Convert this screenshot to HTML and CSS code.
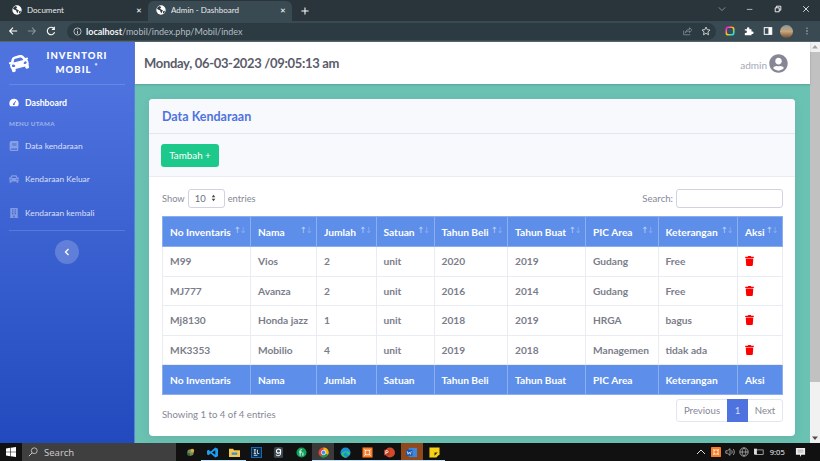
FILE: index.html
```html
<!DOCTYPE html>
<html lang="id">
<head>
<meta charset="utf-8">
<title>Admin - Dashboard</title>
<link rel="stylesheet" href="styles.css">
</head>
<body>
<svg class="defs" aria-hidden="true">
  <symbol id="globe" viewBox="0 0 16 16"><circle cx="8" cy="8" r="7.5" fill="#fff"/><path d="M6 1.5 3 3 1.5 6l3 2 2 .5.5 2 1.5 3 1.500-3 1-2L8 7 6.500 5 8.500 3.500zM14 9l-2 .5-1 2 .5 2.500L14 11.500z" fill="#303c43"/></symbol>
  <symbol id="car" viewBox="0 0 512 512"><path d="M499.990 176h-59.870l-16.640-41.600C406.380 91.630 365.570 64 319.500 64h-127c-46.060 0-86.880 27.630-103.990 70.400L71.870 176H12.010C4.200 176-1.530 183.340.370 190.910l6 24C7.700 220.250 12.500 224 18.010 224h20.070C24.650 235.730 16 252.780 16 272v48c0 16.120 6.160 30.670 16 41.930V416c0 17.670 14.330 32 32 32h32c17.670 0 32-14.330 32-32v-32h256v32c0 17.670 14.330 32 32 32h32c17.670 0 32-14.330 32-32v-54.070c9.840-11.250 16-25.800 16-41.930v-48c0-19.220-8.650-36.270-22.070-48H494c5.510 0 10.310-3.750 11.640-9.090l6-24c1.890-7.570-3.840-14.910-11.650-14.910zm-352.060-17.830c7.290-18.220 24.940-30.170 44.570-30.170h127c19.630 0 37.280 11.950 44.570 30.170L384 208H128l19.930-49.830zM96 319.800c-19.200 0-32-12.760-32-31.900S76.800 256 96 256s48 28.710 48 47.850-28.800 15.950-48 15.950zm320 0c-19.200 0-48 3.190-48-15.950S396.800 256 416 256s32 12.760 32 31.900-12.800 31.900-32 31.900z"/></symbol>
  <symbol id="trash" viewBox="0 0 448 512"><path d="M432 32H312l-9.400-18.700A24 24 0 0 0 281.100 0H166.800a23.720 23.720 0 0 0-21.400 13.300L136 32H16A16 16 0 0 0 0 48v32a16 16 0 0 0 16 16h416a16 16 0 0 0 16-16V48a16 16 0 0 0-16-16zM53.200 467a48 48 0 0 0 47.900 45h245.800a48 48 0 0 0 47.900-45L416 128H32z"/></symbol>
  <symbol id="book" viewBox="0 0 448 512"><path d="M448 360V24c0-13.300-10.700-24-24-24H96C43 0 0 43 0 96v320c0 53 43 96 96 96h328c13.300 0 24-10.700 24-24v-16c0-7.500-3.500-14.300-8.900-18.700-4.200-15.400-4.200-59.300 0-74.700 5.400-4.300 8.900-11.100 8.900-18.600zM128 134c0-3.300 2.700-6 6-6h212c3.300 0 6 2.700 6 6v20c0 3.300-2.700 6-6 6H134c-3.300 0-6-2.700-6-6v-20zm0 64c0-3.300 2.700-6 6-6h212c3.300 0 6 2.700 6 6v20c0 3.300-2.700 6-6 6H134c-3.300 0-6-2.700-6-6v-20zm253.400 250H96c-17.700 0-32-14.300-32-32 0-17.600 14.400-32 32-32h285.400c-1.900 17.100-1.900 46.900 0 64z"/></symbol>
  <symbol id="building" viewBox="0 0 448 512"><path d="M436 480h-20V24c0-13.300-10.700-24-24-24H56C42.700 0 32 10.700 32 24v456H12c-6.600 0-12 5.400-12 12v20h448v-20c0-6.600-5.400-12-12-12zM128 76c0-6.600 5.400-12 12-12h40c6.600 0 12 5.400 12 12v40c0 6.600-5.400 12-12 12h-40c-6.600 0-12-5.400-12-12V76zm0 96c0-6.600 5.400-12 12-12h40c6.600 0 12 5.400 12 12v40c0 6.600-5.400 12-12 12h-40c-6.600 0-12-5.400-12-12v-40zm52 148h-40c-6.600 0-12-5.400-12-12v-40c0-6.600 5.400-12 12-12h40c6.600 0 12 5.400 12 12v40c0 6.600-5.400 12-12 12zm76 160h-64v-84c0-6.600 5.400-12 12-12h40c6.600 0 12 5.400 12 12v84zm64-172c0 6.600-5.400 12-12 12h-40c-6.600 0-12-5.400-12-12v-40c0-6.600 5.400-12 12-12h40c6.600 0 12 5.400 12 12v40zm0-96c0 6.600-5.400 12-12 12h-40c-6.600 0-12-5.400-12-12v-40c0-6.600 5.400-12 12-12h40c6.600 0 12 5.400 12 12v40zm0-96c0 6.600-5.400 12-12 12h-40c-6.600 0-12-5.400-12-12V76c0-6.600 5.400-12 12-12h40c6.600 0 12 5.400 12 12v40z"/></symbol>
</svg>

<div class="screen">
  <header class="tabstrip">
    <div class="tab">
      <svg class="ico-globe"><use href="#globe"/></svg>
      <span class="tab-title">Document</span>
      <span class="tab-close">✕</span>
    </div>
    <div class="tab tab-active">
      <svg class="ico-globe"><use href="#globe"/></svg>
      <span class="tab-title">Admin - Dashboard</span>
      <span class="tab-close">✕</span>
    </div>
    <svg class="newtab" viewBox="0 0 10 10"><path d="M5 .5v9M.5 5h9" stroke="#fff" stroke-width="1.300"/></svg>
    <div class="win-controls">
      <svg viewBox="0 0 10 10"><path d="M1 3l4 4 4-4" fill="none" stroke="#99a5ab" stroke-width="1"/></svg>
      <svg viewBox="0 0 10 10"><path d="M1 5.500h7" stroke="#c9d0d3" stroke-width="1"/></svg>
      <svg viewBox="0 0 10 10"><path d="M1.500 3.500h5v5h-5zM3 3.500V1.500h5.500v5h-2" fill="none" stroke="#fff" stroke-width="1.100"/></svg>
      <svg viewBox="0 0 10 10"><path d="M1.500 1.500l7 7M8.500 1.500l-7 7" stroke="#fff" stroke-width="1"/></svg>
    </div>
  </header>

  <div class="toolbar">
    <svg class="nav-ico" viewBox="0 0 12 12"><path d="M11 6H2M6 2 2 6l4 4" fill="none" stroke="#fff" stroke-width="1.300"/></svg>
    <svg class="nav-ico" viewBox="0 0 12 12"><path d="M1 6h9M6 2l4 4-4 4" fill="none" stroke="#84939b" stroke-width="1.300"/></svg>
    <svg class="nav-ico" viewBox="0 0 12 12"><path d="M10.300 7.500A4.500 4.500 0 1 1 9.500 3M10 1v3H7" fill="none" stroke="#fff" stroke-width="1.300"/></svg>
    <div class="omnibox">
      <svg class="info" viewBox="0 0 10 10"><circle cx="5" cy="5" r="4" fill="none" stroke="#d5dadd" stroke-width=".9"/><path d="M5 4.500v3M5 2.500v1" stroke="#d5dadd" stroke-width="1"/></svg>
      <span class="url"><b>localhost</b>/mobil/index.php/Mobil/index</span>
      <svg class="omni-end" viewBox="0 0 12 12"><path d="M2 5.500V10.500h8M4 8c.5-3 3-4 5-4V2l3 3-3 3V6C7 6 5 7 4 8z" fill="none" stroke="#8a989f" stroke-width=".9"/></svg>
      <svg class="omni-end" viewBox="0 0 12 12"><path d="m6 1.300 1.400 3.100 3.400.4-2.500 2.300.7 3.400L6 8.800l-3 1.700.7-3.400L1.200 4.800l3.400-.4z" fill="none" stroke="#e3e7e9" stroke-width="1"/></svg>
    </div>
    <div class="ext">
      <svg viewBox="0 0 12 12"><rect x="1.500" y="1.500" width="9" height="9" rx="2.500" fill="none" stroke="url(#rb)" stroke-width="2"/><defs><linearGradient id="rb" x1="0" y1="0" x2="1" y2="1"><stop offset="0" stop-color="#f0f"/><stop offset=".5" stop-color="#fc0"/><stop offset="1" stop-color="#0df"/></linearGradient></defs><circle cx="6" cy="6" r="2.600" fill="#28506f"/></svg>
      <svg viewBox="0 0 12 12"><path d="M1 4h2.500V3a1.500 1.500 0 0 1 3 0v1H9v2.500h1a1.500 1.500 0 0 1 0 3H9V11H1V8.500h1a1.500 1.500 0 0 0 0-3H1z" fill="#fff"/></svg>
      <svg viewBox="0 0 12 12"><rect x="1.500" y="2" width="9" height="8" fill="none" stroke="#fff" stroke-width="1.200"/><rect x="6.500" y="2" width="4" height="8" fill="#fff"/></svg>
      <svg viewBox="0 0 12 12"><defs><linearGradient id="av" x1="0" y1="0" x2="0" y2="1"><stop offset="0" stop-color="#8a97a0"/><stop offset=".5" stop-color="#c9a679"/><stop offset="1" stop-color="#6e4d37"/></linearGradient></defs><circle cx="6" cy="6" r="6" fill="url(#av)"/></svg>
      <svg viewBox="0 0 12 12"><path d="M6 2v1M6 5.500v1M6 9v1" stroke="#fff" stroke-width="1.400"/></svg>
    </div>
  </div>

  <div class="viewport">
    <aside class="sidebar">
      <div class="brand">
        <svg class="brand-ico"><use href="#car"/></svg>
        <div class="brand-text">INVENTORI<br>MOBIL <sup>*</sup></div>
      </div>
      <a class="nav-item nav-active"><svg class="dash-ico" viewBox="0 0 16 14"><path d="M8 1a7.500 7.500 0 0 0-7.500 7.500c0 1.400.4 2.700 1 3.800.2.400.5.500 1 .5h11c.5 0 .8-.1 1-.5.600-1.100 1-2.400 1-3.800A7.500 7.500 0 0 0 8 1zm3.500 3.500L9 8.800a1.500 1.500 0 1 1-1.300-.6l2.800-4.200z" fill="#fff"/></svg>Dashboard</a>
      <div class="nav-heading">MENU UTAMA</div>
      <a class="nav-item"><svg class="nav-svg"><use href="#book"/></svg>Data kendaraan</a>
      <a class="nav-item"><svg class="nav-svg"><use href="#car"/></svg>Kendaraan Keluar</a>
      <a class="nav-item"><svg class="nav-svg"><use href="#building"/></svg>Kendaraan kembali</a>
      <hr class="side-rule">
      <button class="side-toggle" type="button"><svg viewBox="0 0 6 8"><path d="M4.500 1 1.500 4l3 3" fill="none" stroke="#fff" stroke-width="1.300"/></svg></button>
    </aside>

    <div class="page">
      <div class="topbar">
        <h1 class="clock">Monday, 06-03-2023 /09:05:13 am</h1>
        <div class="user">
          <span class="user-name">admin</span>
          <svg class="user-ico" viewBox="0 0 496 512"><path d="M248 8C111 8 0 119 0 256s111 248 248 248 248-111 248-248S385 8 248 8zm0 96c48.600 0 88 39.400 88 88s-39.400 88-88 88-88-39.400-88-88 39.400-88 88-88zm0 344c-58.700 0-111.300-26.600-146.500-68.200 18.800-35.400 55.600-59.800 98.500-59.800 2.400 0 4.800.4 7.100 1.100 13 4.200 26.600 6.900 40.900 6.900 14.300 0 28-2.700 40.900-6.900 2.300-.7 4.700-1.100 7.100-1.100 42.900 0 79.700 24.400 98.500 59.800C359.300 421.400 306.700 448 248 448z"/></svg>
        </div>
      </div>

      <main class="content">
        <section class="card">
          <div class="card-head">Data Kendaraan</div>
          <div class="card-action"><button class="btn-add" type="button">Tambah +</button></div>
          <div class="card-body">
            <div class="dt-top">
              <div class="dt-length">Show <span class="fake-select">10<svg viewBox="0 0 6 10"><path d="M3 1 .8 4h4.400zM3 9 .8 6h4.400z" fill="#444"/></svg></span> entries</div>
              <div class="dt-search">Search: <span class="fake-input"></span></div>
            </div>
            <table class="data">
              <colgroup>
                <col class="c1"><col class="c2"><col class="c3"><col class="c4"><col class="c5"><col class="c6"><col class="c7"><col class="c8"><col class="c9">
              </colgroup>
              <thead>
                <tr>
                  <th>No Inventaris<span class="sort"><i>↑</i>↓</span></th>
                  <th>Nama<span class="sort"><i>↑</i>↓</span></th>
                  <th>Jumlah<span class="sort"><i>↑</i>↓</span></th>
                  <th>Satuan<span class="sort"><i>↑</i>↓</span></th>
                  <th>Tahun Beli<span class="sort"><i>↑</i>↓</span></th>
                  <th>Tahun Buat<span class="sort"><i>↑</i>↓</span></th>
                  <th>PIC Area<span class="sort"><i>↑</i>↓</span></th>
                  <th>Keterangan<span class="sort"><i>↑</i>↓</span></th>
                  <th>Aksi<span class="sort"><i>↑</i>↓</span></th>
                </tr>
              </thead>
              <tbody>
                <tr><td>M99</td><td>Vios</td><td>2</td><td>unit</td><td>2020</td><td>2019</td><td>Gudang</td><td>Free</td><td><svg class="trash"><use href="#trash"/></svg></td></tr>
                <tr><td>MJ777</td><td>Avanza</td><td>2</td><td>unit</td><td>2016</td><td>2014</td><td>Gudang</td><td>Free</td><td><svg class="trash"><use href="#trash"/></svg></td></tr>
                <tr><td>Mj8130</td><td>Honda jazz</td><td>1</td><td>unit</td><td>2018</td><td>2019</td><td>HRGA</td><td>bagus</td><td><svg class="trash"><use href="#trash"/></svg></td></tr>
                <tr><td>MK3353</td><td>Mobilio</td><td>4</td><td>unit</td><td>2019</td><td>2018</td><td>Managemen</td><td>tidak ada</td><td><svg class="trash"><use href="#trash"/></svg></td></tr>
              </tbody>
              <tfoot>
                <tr><th>No Inventaris</th><th>Nama</th><th>Jumlah</th><th>Satuan</th><th>Tahun Beli</th><th>Tahun Buat</th><th>PIC Area</th><th>Keterangan</th><th>Aksi</th></tr>
              </tfoot>
            </table>
            <div class="dt-bottom">
              <div class="dt-info">Showing 1 to 4 of 4 entries</div>
              <div class="pager"><span class="pg pg-prev">Previous</span><span class="pg pg-cur">1</span><span class="pg pg-next">Next</span></div>
            </div>
          </div>
        </section>
      </main>
    </div>

    <div class="scrollbar">
      <svg class="sb-arrow" viewBox="0 0 10 10"><path d="M5 3 2 6.500h6z" fill="#a3a3a3"/></svg>
      <div class="sb-track"><div class="sb-thumb"></div></div>
      <svg class="sb-arrow" viewBox="0 0 10 10"><path d="M5 7 2 3.500h6z" fill="#505050"/></svg>
    </div>
  </div>

  <footer class="taskbar">
    <div class="start"><svg viewBox="0 0 12 12"><path d="M0 1.800 5 1v4.700H0zM5.700.9 12 0v5.700H5.700zM0 6.300h5V11l-5-.8zM5.700 6.300H12V12l-6.300-.9z" fill="#fff"/></svg></div>
    <div class="tb-search">
      <svg viewBox="0 0 12 12"><circle cx="7.500" cy="4.500" r="3.500" fill="none" stroke="#ccc" stroke-width="1"/><path d="M5 7 1 11" stroke="#ccc" stroke-width="1.200"/></svg>
      <span>Search</span>
    </div>
    <div class="tb-apps">
      <span class="app"><svg viewBox="0 0 12 12"><circle cx="6" cy="6" r="3.500" fill="#7a8a5a"/><circle cx="8" cy="4" r="2" fill="#d1b13a"/><circle cx="4" cy="8" r="1.500" fill="#2a6b3a"/></svg></span>
      <span class="app app-open"><svg viewBox="0 0 12 12"><path d="M9 .5 12 2v8l-3 1.500L4 7l-2.500 2L0 8V4l1.500-1L4 5z" fill="#1f9cf0"/><path d="M9 3.500 5.500 6 9 8.500z" fill="#0b0b0b"/></svg></span>
      <span class="app app-open"><svg viewBox="0 0 12 12"><path d="M0 2h4.500l1 1.500H12V11H0z" fill="#f2c94c"/><rect x="3" y="6" width="6" height="2.500" fill="#3f8fd2"/></svg></span>
      <span class="app"><svg viewBox="0 0 12 12"><rect x=".5" y=".5" width="11" height="11" fill="#082e4d" stroke="#1470c0"/><path d="M3 3h2.500M4.200 3v4M3 7h2.500M7 3v4h2M3 9h4" stroke="#fff" stroke-width=".9"/></svg></span>
      <span class="app"><svg viewBox="0 0 12 12"><rect x="1" y="0" width="10" height="12" rx="2" fill="#3a4650"/><circle cx="6" cy="4.500" r="2.200" fill="none" stroke="#fff" stroke-width="1.200"/><path d="M8.300 2.500v4.700c0 3-4.500 3-4.800 1" fill="none" stroke="#fff" stroke-width="1.100"/></svg></span>
      <span class="app"><svg viewBox="0 0 12 12"><circle cx="6" cy="6" r="5.500" fill="#10a25a"/><path d="M4.500 9.500V4c0-1 1-1.500 2-1M3.500 5.500h3M7.500 9.500V6" stroke="#fff" stroke-width="1" fill="none"/></svg></span>
      <span class="app app-active"><svg viewBox="0 0 12 12"><circle cx="6" cy="6" r="5.500" fill="#db4437"/><path d="M6 6 11 8.500A5.500 5.500 0 0 1 3 10.500z" fill="#0f9d58"/><path d="M6 .5A5.500 5.500 0 0 1 11 8.500L6 6z" fill="#f4b400"/><circle cx="6" cy="6" r="2.400" fill="#4285f4" stroke="#fff" stroke-width=".8"/></svg></span>
      <span class="app app-open"><svg viewBox="0 0 12 12"><circle cx="6" cy="6" r="5.500" fill="#1b8fd6"/><path d="M1.500 8C3 4 9 3.500 11 6.500c0 2-3 2.500-3.500 1C9 5 3 5.500 4 9c.5 1.500 3 2.500 5 1.500-3 2.500-6 1-7.500-2.500z" fill="#35c46b"/></svg></span>
      <span class="app app-open"><svg viewBox="0 0 12 12"><rect x=".5" y=".5" width="11" height="11" fill="#fb7a24"/><path d="M3.500 3.500h5v5h-5zM2.500 2.500l2 2M9.500 2.500l-2 2M2.500 9.500l2-2M9.500 9.500l-2-2" fill="none" stroke="#fff" stroke-width=".9"/></svg></span>
      <span class="app app-open"><svg viewBox="0 0 12 12"><circle cx="6.500" cy="6" r="5.500" fill="#d2492b"/><rect x="0" y="3" width="6" height="6" fill="#b33a1f"/><path d="M2 8V4h1.500a1 1 0 0 1 0 2.200H2" fill="none" stroke="#fff" stroke-width=".9"/></svg></span>
      <span class="app app-word"><svg viewBox="0 0 12 12"><rect x="3" y="1" width="9" height="10" fill="#3f86d8"/><rect x="0" y="3" width="7" height="6.500" fill="#1a55a8"/><path d="M1.200 4.500l1 3.500 1.300-2.500L4.800 8l1-3.500" fill="none" stroke="#fff" stroke-width=".7"/></svg></span>
      <span class="app app-open"><svg viewBox="0 0 12 12"><path d="M.5 .5h11v7.500l-3.500 3.500H.5z" fill="#f8d115"/><path d="M6 6h3.500L6 9.500z" fill="#2a2a2a"/></svg></span>
    </div>
    <div class="tray">
      <svg class="tray-sm" viewBox="0 0 10 10"><path d="M1 7l4-4 4 4" fill="none" stroke="#ddd" stroke-width="1"/></svg>
      <svg viewBox="0 0 12 12"><rect width="12" height="12" rx="1" fill="#fb7a24"/><path d="M3.500 3.500h5v5h-5zM2.500 2.500l2 2M9.500 2.500l-2 2M2.500 9.500l2-2M9.500 9.500l-2-2" fill="none" stroke="#fff" stroke-width=".9"/></svg>
      <svg viewBox="0 0 12 12"><path d="M1 4.500h2L6 2v8L3 7.500H1zM8 4c.8 1 .8 3 0 4M10 2.500c1.500 2 1.500 5 0 7" fill="none" stroke="#ddd" stroke-width=".8"/></svg>
      <svg viewBox="0 0 12 12"><circle cx="6" cy="6" r="5" fill="none" stroke="#ddd" stroke-width=".8"/><path d="M1 6h10M6 1c-3 3-3 7 0 10M6 1c3 3 3 7 0 10" fill="none" stroke="#ddd" stroke-width=".7"/></svg>
      <svg viewBox="0 0 12 12"><rect x="2" y="3.500" width="9" height="5.500" fill="none" stroke="#ddd" stroke-width=".8"/><rect x="0" y="2" width="3.500" height="7" fill="#ddd"/></svg>
      <span class="tb-time">9:05</span>
      <svg class="tray-note" viewBox="0 0 12 12"><path d="M1 1h10v7.500H7L5.500 11V8.500H1z" fill="#eee"/><path d="M3 3.500h6M3 5.500h6" stroke="#777" stroke-width=".6"/></svg>
    </div>
  </footer>
</div>
</body>
</html>
```

FILE: styles.css
```css
* { box-sizing: border-box; }
html, body { margin: 0; height: 100%; overflow: hidden; }
body { font-family: "Noto Sans", "Open Sans", sans-serif; }
.defs { display: none; }

.screen { width: 820px; height: 461px; display: flex; flex-direction: column; background: #111; }

/* browser chrome */
.tabstrip { height: 21px; flex: none; display: flex; align-items: flex-end; background: #2a353b; padding-left: 4px; color: #e8eaed; font-family: Lato, sans-serif; font-size: 8px; }
.tab { width: 144px; height: 20px; display: flex; align-items: center; padding: 0 6px 2px 8px; gap: 5px; }
.tab-active { background: #3a4a52; border-radius: 6px 6px 0 0; margin-right: 4px; }
.ico-globe { width: 10px; height: 10px; flex: none; }
.tab-title { flex: 1; white-space: nowrap; }
.tab-close { font-family: "Noto Sans", sans-serif; font-size: 7px; color: #fff; }
.newtab { width: 8px; height: 8px; margin: 0 0 6px 5px; }
.win-controls { margin-left: auto; display: flex; gap: 20px; align-items: center; align-self: flex-start; height: 17px; padding-right: 10px; }
.win-controls svg { width: 8px; height: 8px; }

.toolbar { height: 21px; flex: none; display: flex; align-items: center; background: #3a4a52; padding: 0 8px; border-bottom: 1px solid #56646b; }
.nav-ico { width: 10px; height: 10px; margin-right: 9px; flex: none; }
.omnibox { margin-left: 2px; flex: 1; height: 17px; background: #2c3a42; border-radius: 9px; display: flex; align-items: center; padding: 0 5px 0 6px; color: #b4bdc2; font-family: Lato, sans-serif; font-size: 9px; }
.info { width: 9px; height: 9px; margin-right: 4px; }
.url { flex: 1; white-space: nowrap; }
.url b { font-weight: 700; color: #f1f3f4; }
.omni-end { width: 10px; height: 10px; margin-left: 9px; }
.ext { display: flex; align-items: center; gap: 9px; margin-left: 9px; }
.ext svg { width: 10px; height: 10px; }
.ext svg:nth-child(4) { width: 13px; height: 13px; margin-left: -1.500px; }

/* page viewport */
.viewport { flex: 1; min-height: 0; display: flex; font-family: Lato, "Noto Sans", sans-serif; }
.sidebar { width: 135px; flex: none; display: flex; flex-direction: column; background: linear-gradient(180deg, #4e73df 10%, #224abe 100%); color: #fff; padding: 0 9px; border-right: 1px solid #5d7fdc; }
.brand { height: 43px; flex: none; display: flex; align-items: center; border-bottom: 1px solid rgba(255,255,255,.15); }
.brand-ico { width: 20px; height: 20px; fill: #fff; transform: rotate(-15deg); flex: none; }
.brand-text { width: 82px; margin-left: 7px; text-align: center; font-size: 9.500px; font-weight: 900; letter-spacing: 1px; line-height: 14px; white-space: nowrap; }
.brand-text sup { font-size: 7px; line-height: 0; }

.nav-item { height: 33.500px; flex: none; display: flex; align-items: center; color: rgba(255,255,255,.8); font-size: 8.400px; white-space: nowrap; }
.nav-active { height: 34px; color: #fff; font-size: 8.700px; font-weight: 700; }
.dash-ico { width: 10px; height: 9px; margin-right: 6px; flex: none; }
.nav-svg { width: 10px; height: 10px; margin-right: 6px; flex: none; fill: rgba(255,255,255,.35); }
.nav-heading { height: 8px; margin: 1px 0; font-size: 6.200px; font-weight: 900; letter-spacing: .3px; color: rgba(255,255,255,.45); line-height: 8px; }
.side-rule { margin: 0; border: 0; border-top: 1px solid rgba(255,255,255,.15); }
.side-toggle { width: 24px; height: 24px; margin: 9px auto 0; border: 0; padding: 0; border-radius: 50%; background: rgba(255,255,255,.2); display: flex; align-items: center; justify-content: center; }
.side-toggle svg { width: 6px; height: 8px; }

.page { flex: 1; min-width: 0; display: flex; flex-direction: column; }
.topbar { height: 42px; flex: none; background: #fff; display: flex; align-items: center; justify-content: space-between; padding: 0 22px 0 9px; box-shadow: 0 1px 2px rgba(58,59,69,.25); position: relative; }
.clock { margin: 0; color: #5a5c69; font-size: 13px; letter-spacing: -.32px; font-weight: 700; white-space: nowrap; }
.user { display: flex; align-items: center; gap: 2px; color: #a3a7b8; font-size: 10px; }
.user-name { padding-top: 4px; }
.user-ico { width: 19px; height: 19px; fill: #858796; }

.content { flex: 1; min-height: 0; background: #6ac2b3; padding: 15px 15px 7px 14px; }
.card { height: 337px; background: #fff; border-radius: 4px; display: flex; flex-direction: column; box-shadow: 0 2px 8px rgba(58,59,69,.1); }
.card-head { height: 35px; flex: none; padding: 0 13px; display: flex; align-items: center; background: #f8f9fc; border-bottom: 1px solid #e3e6f0; border-radius: 4px 4px 0 0; color: #4e73df; font-size: 12.500px; font-weight: 700; }
.card-action { height: 43px; flex: none; padding: 9px 12px; background: #f8f9fc; border-bottom: 1px solid #eaecf4; }
.btn-add { width: 58px; height: 23px; border: 0; padding: 0; border-radius: 3px; background: #1cc88a; color: #fff; font: 400 9.800px Lato, sans-serif; }
.card-body { flex: 1; min-height: 0; padding: 11px 12px 0 13px; color: #858796; font-size: 9.600px; }

.dt-top { height: 20px; display: flex; justify-content: space-between; align-items: center; }
.dt-length { display: flex; align-items: center; gap: 3px; font-size: 9.300px; }
.fake-select { width: 37px; height: 19px; border: 1px solid #d1d3e2; border-radius: 3px; display: flex; align-items: center; justify-content: space-between; padding: 0 8px 0 6px; font-size: 9.500px; color: #6e707e; }
.fake-select svg { width: 5px; height: 8px; }
.dt-search { display: flex; align-items: center; gap: 3px; }
.fake-input { width: 107px; height: 19px; border: 1px solid #d1d3e2; border-radius: 3px; }

.data { width: 620px; margin-top: 8px; table-layout: fixed; border-collapse: collapse; font-size: 10.200px; }
.c1 { width: 88px; } .c2 { width: 66px; } .c3 { width: 59.500px; } .c4 { width: 58px; } .c5 { width: 73.500px; } .c6 { width: 78px; } .c7 { width: 72.500px; } .c8 { width: 79.500px; } .c9 { width: 45px; }
.data th { height: 30px; position: relative; padding: 0 7px; text-align: left; background: #5d8eea; color: #fff; font-weight: 700; border: 1px solid #8aaeee; white-space: nowrap; }
.data td { height: 29.500px; padding: 0 7px; color: #7b7d8a; font-weight: 700; border: 1px solid #eaecf4; white-space: nowrap; }
.sort { position: absolute; right: 5px; top: 8px; font-family: "DejaVu Sans", sans-serif; font-size: 8.500px; line-height: 10px; font-weight: 400; color: rgba(255,255,255,.3); letter-spacing: -1.500px; }
.sort i { font-style: normal; color: rgba(255,255,255,.6); }
.trash { width: 9px; height: 10px; fill: #f00; display: block; }

.dt-bottom { margin-top: 4px; display: flex; align-items: center; justify-content: space-between; }
.dt-info { padding-top: 7px; }
.pager { display: flex; height: 23px; border: 1px solid #e3e6f0; border-radius: 3px; }
.pg { display: flex; align-items: center; justify-content: center; color: #858796; }
.pg-prev { width: 50px; }
.pg-cur { width: 21px; background: #4e73df; color: #d7def8; margin: -1px 0; }
.pg-next { width: 34px; }

.scrollbar { width: 10px; flex: none; background: #f1f1f1; display: flex; flex-direction: column; }
.sb-arrow { width: 10px; height: 10px; flex: none; }
.sb-track { flex: 1; min-height: 0; }
.sb-thumb { height: 330px; background: #c1c1c1; }

/* taskbar */
.taskbar { height: 18px; flex: none; display: flex; align-items: center; background: #111; color: #ddd; }
.start { width: 22px; height: 18px; display: flex; align-items: center; justify-content: center; }
.start svg { width: 10px; height: 10px; }
.tb-search { width: 154px; height: 18px; background: #3f3f3f; display: flex; align-items: center; gap: 6px; padding-left: 6px; font-size: 9.500px; color: #c8c8c8; }
.tb-search svg { width: 10px; height: 10px; }
.tb-apps { display: flex; margin-left: 3px; height: 18px; }
.app { width: 22.200px; height: 18px; display: flex; align-items: center; justify-content: center; }
.app svg { width: 11px; height: 11px; }
.app-open { box-shadow: inset 0 -1px 0 #bfe0f5; }
.app-active { background: #3a3a3a; box-shadow: inset 0 -1px 0 #bfe0f5; }
.app-word { background: #8e4a1c; box-shadow: inset 0 -1px 0 #bfe0f5; }
.tray { margin-left: auto; display: flex; align-items: center; gap: 4.300px; padding-right: 14px; }
.tray svg { width: 10px; height: 10px; flex: none; }
.tb-time { font-size: 7.500px; color: #eee; margin: 0 6px 0 2px; white-space: nowrap; }
.tray svg.tray-note { width: 11px; height: 11px; }
```
